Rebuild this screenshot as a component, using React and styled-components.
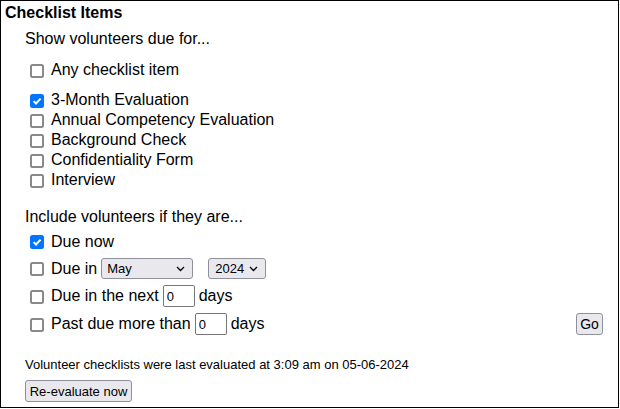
import React, { useState } from "react";
import styled, { createGlobalStyle } from "styled-components";

const Global = createGlobalStyle`
  html, body { margin: 0; padding: 0; background: #fff; }
  body { font-family: "Liberation Sans", Arial, sans-serif; }
`;

const Panel = styled.div`
  box-sizing: border-box;
  width: 619px;
  height: 408px;
  border: 1px solid #000;
  padding: 2px 15px 0 4px;
  display: flex;
  flex-direction: column;
  font-family: "Liberation Sans", Arial, sans-serif;
  font-size: 16px;
  color: #000;
`;

const Title = styled.div`
  font-weight: bold;
  height: 20px;
  line-height: 20px;
`;

const Section = styled.div`
  display: flex;
  flex-direction: column;
  padding-left: 20px;
  margin-top: ${(p) => p.$mt || 0}px;
`;

const Prompt = styled.div`
  height: 20px;
  line-height: 20px;
`;

const Row = styled.label`
  display: flex;
  align-items: center;
  height: ${(p) => p.$h || 20}px;
  margin-top: ${(p) => p.$mt || 0}px;
  line-height: 20px;
  white-space: nowrap;
`;

const HiddenInput = styled.input.attrs({ type: "checkbox" })`
  position: absolute;
  opacity: 0;
  width: 0;
  height: 0;
  margin: 0;
`;

const Box = styled.span`
  box-sizing: border-box;
  flex: none;
  width: 14px;
  height: 14px;
  margin: 1px 7px 0 5px;
  border-radius: 2.5px;
  border: ${(p) => (p.$on ? "none" : "2px solid #8a8a8a")};
  background: ${(p) => (p.$on ? "#0075ff" : "#fff")};
  display: flex;
  align-items: center;
  justify-content: center;
`;

function Check({ defaultChecked = false }) {
  const [on, setOn] = useState(defaultChecked);
  return (
    <>
      <HiddenInput checked={on} onChange={(e) => setOn(e.target.checked)} />
      <Box $on={on}>
        {on && (
          <svg width="12" height="12" viewBox="0 0 12 12">
            <path d="M2.6 6.1 L5 8.5 L9.6 3.6" fill="none" stroke="#fff" strokeWidth="2" />
          </svg>
        )}
      </Box>
    </>
  );
}

const Spacer = styled.div`
  flex: 1;
`;

const SelectWrap = styled.span`
  position: relative;
  display: inline-flex;
  margin-left: ${(p) => p.$ml || 0}px;
`;

const Select = styled.select`
  appearance: none;
  -webkit-appearance: none;
  box-sizing: border-box;
  width: ${(p) => p.$w}px;
  height: 21px;
  border: 1px solid #8f8f9d;
  border-radius: 3px;
  background: #e9e9ed;
  font-family: "Liberation Sans", Arial, sans-serif;
  font-size: 13px;
  color: #000;
  padding: 0 0 0 ${(p) => p.$pl || 5}px;
  margin: 0;
  outline: none;
`;

const Chevron = styled.svg`
  position: absolute;
  right: 8px;
  top: 8px;
  pointer-events: none;
`;

const NumInput = styled.input.attrs({ type: "text" })`
  box-sizing: border-box;
  width: 32px;
  height: 22px;
  margin: 0 4px 0 4px;
  padding: 0 0 0 3px;
  border: 1px solid #767676;
  border-radius: 2px;
  font-family: "Liberation Sans", Arial, sans-serif;
  font-size: 13px;
  color: #000;
  background: #fff;
  outline: none;
`;

const Button = styled.button`
  box-sizing: border-box;
  height: 22px;
  width: ${(p) => p.$w}px;
  padding: 0;
  margin: 0;
  border: 1px solid #8f8f9d;
  border-radius: 3px;
  background: #e9e9ed;
  font-family: "Liberation Sans", Arial, sans-serif;
  font-size: ${(p) => p.$fs || 13}px;
  color: #000;
  text-align: center;
`;

const Note = styled.div`
  font-size: 13px;
  height: 20px;
  line-height: 20px;
  margin-top: 17px;
`;

const ButtonRow = styled.div`
  display: flex;
  margin-top: 5px;
`;

function ChevronIcon() {
  return (
    <Chevron width="9" height="6" viewBox="0 0 9 6">
      <path d="M1 1 L4.5 4.5 L8 1" fill="none" stroke="#000" strokeWidth="1.3" />
    </Chevron>
  );
}

const items = [
  ["3-Month Evaluation", true],
  ["Annual Competency Evaluation", false],
  ["Background Check", false],
  ["Confidentiality Form", false],
  ["Interview", false],
];

const months = [
  "January", "February", "March", "April", "May", "June",
  "July", "August", "September", "October", "November", "December",
];

export default function App() {
  return (
    <>
      <Global />
      <Panel>
        <Title>Checklist Items</Title>
        <Section $mt={6}>
          <Prompt>Show volunteers due for...</Prompt>
          <Row $mt={11}>
            <Check />
            Any checklist item
          </Row>
          {items.map(([label, checked], i) => (
            <Row key={label} $mt={i === 0 ? 10 : 0}>
              <Check defaultChecked={checked} />
              {label}
            </Row>
          ))}
        </Section>
        <Section $mt={17}>
          <Prompt>Include volunteers if they are...</Prompt>
          <Row $h={27} $mt={1}>
            <Check defaultChecked />
            Due now
          </Row>
          <Row $h={27}>
            <Check />
            Due in
            <SelectWrap $ml={4}>
              <Select $w={92} defaultValue="May">
                {months.map((m) => (
                  <option key={m}>{m}</option>
                ))}
              </Select>
              <ChevronIcon />
            </SelectWrap>
            <SelectWrap $ml={15}>
              <Select $w={58} $pl={6} defaultValue="2024">
                <option>2023</option>
                <option>2024</option>
                <option>2025</option>
              </Select>
              <ChevronIcon />
            </SelectWrap>
          </Row>
          <Row $h={28}>
            <Check />
            Due in the next
            <NumInput defaultValue="0" />
            days
          </Row>
          <Row $h={28}>
            <Check />
            Past due more than
            <NumInput defaultValue="0" />
            days
            <Spacer />
            <Button $w={27} $fs={14} type="button">Go</Button>
          </Row>
        </Section>
        <Section>
          <Note>Volunteer checklists were last evaluated at 3:09 am on 05-06-2024</Note>
          <ButtonRow>
            <Button $w={107} type="button">Re-evaluate now</Button>
          </ButtonRow>
        </Section>
      </Panel>
    </>
  );
}
